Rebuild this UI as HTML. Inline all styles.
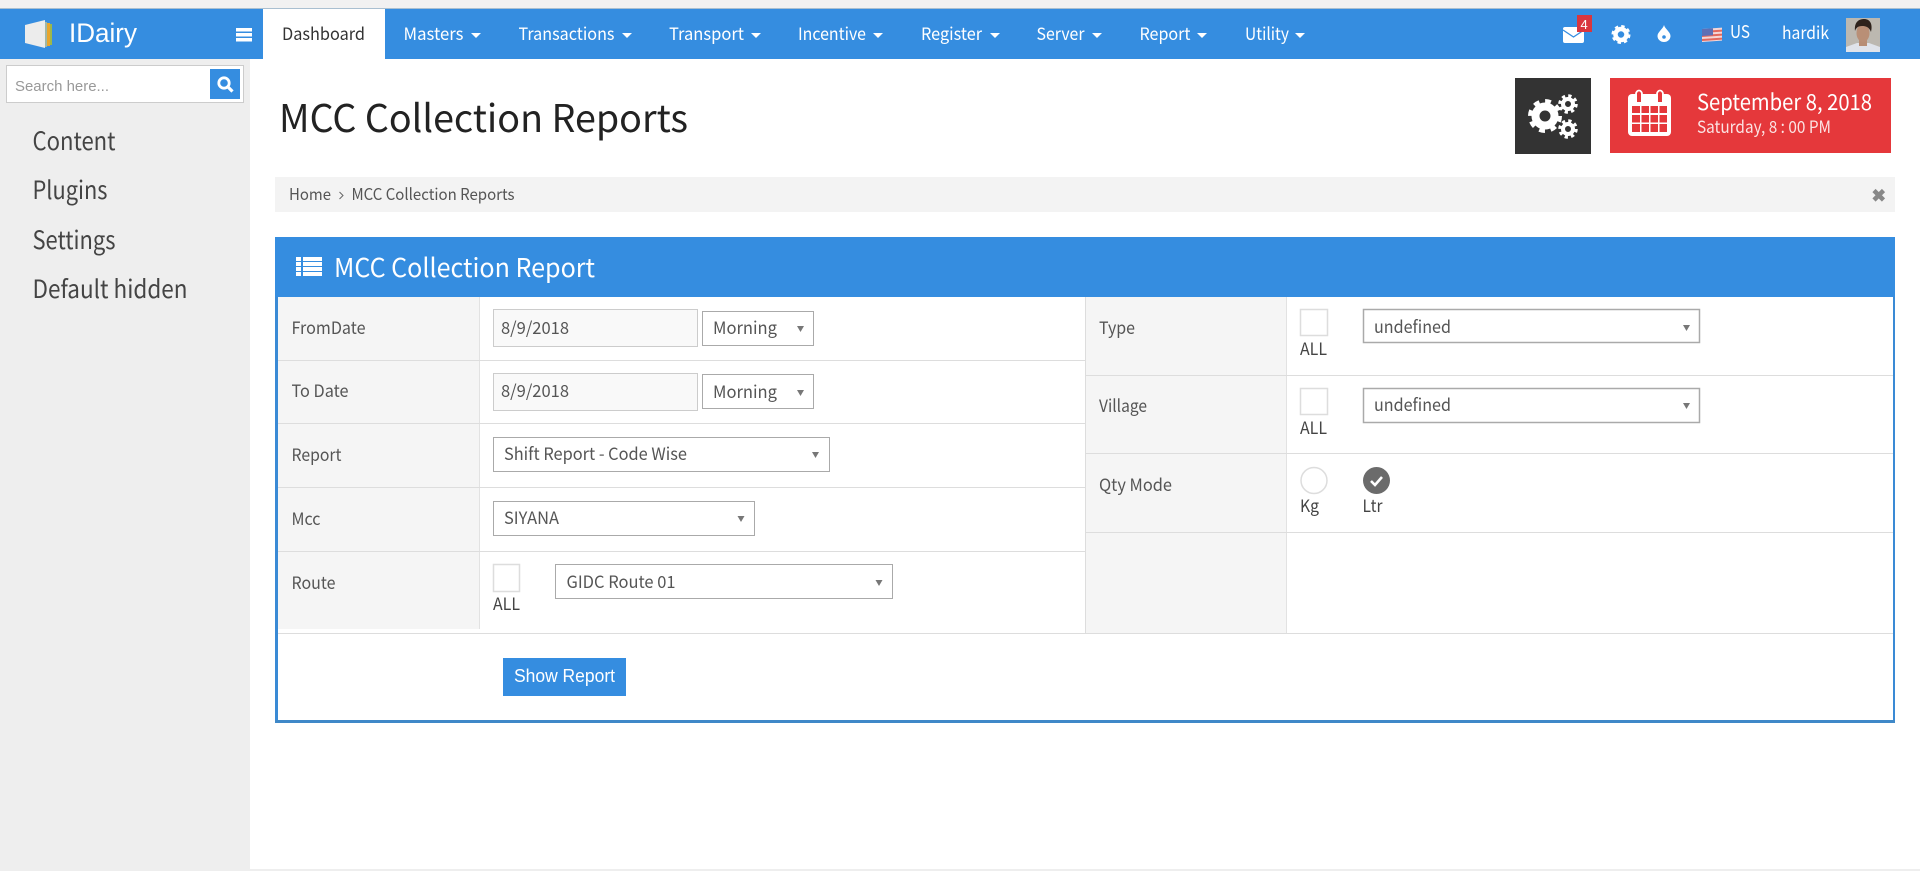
<!DOCTYPE html>
<html lang="en">
<head>
<meta charset="utf-8">
<title>MCC Collection Reports</title>
<style>
html,body{margin:0;padding:0;width:1920px;height:871px;overflow:hidden;background:#fff}
svg{display:block}
text{font-family:"Noto Sans CJK SC","Liberation Sans",sans-serif}
text.ar{font-family:"Liberation Sans",Arial,sans-serif}
.nav{font-size:17px;fill:#fff}
.side{font-size:25px;fill:#444}
.lbl{font-size:17px;fill:#555}
.val{font-size:17px;fill:#555}
.dark{font-size:17px;fill:#444}
.box{fill:#fff;stroke:#aaa;stroke-width:1}
.chk{fill:#fff;stroke:#ddd;stroke-width:1.5}
.in{fill:#f9f9f9;stroke:#ccc;stroke-width:1}
.line{fill:#ddd}
</style>
</head>
<body>
<svg xmlns="http://www.w3.org/2000/svg" width="1920" height="871" viewBox="0 0 1920 871">
<!-- top strip + nav -->
<rect width="1920" height="871" fill="#fff"/>
<rect width="1920" height="8" fill="#f1f1f1"/>
<rect y="8" width="1920" height="1" fill="#a9bfd0"/>
<rect y="9" width="1920" height="50" fill="#358de0"/>
<rect x="263" y="9" width="122" height="50" fill="#fff"/>
<!-- logo -->
<polygon points="25,25 45,20 45,48 25,43" fill="#ececec"/>
<rect x="45" y="22" width="2" height="25" fill="#9fb7a8"/>
<rect x="47" y="23" width="3" height="23" fill="#e8a52c"/>
<rect x="50" y="24" width="2" height="21" fill="#9cb84a"/>
<text class="ar" x="69" y="42" font-size="27" fill="#fff" textLength="68" lengthAdjust="spacingAndGlyphs">IDairy</text>
<rect x="236" y="28" width="16" height="3.500" fill="#fff"/><rect x="236" y="33" width="16" height="3.500" fill="#fff"/><rect x="236" y="38" width="16" height="3.500" fill="#fff"/>
<!-- nav items -->
<text x="282" y="40" class="nav" style="fill:#333" textLength="83" lengthAdjust="spacingAndGlyphs">Dashboard</text>
<text x="403.500" y="40" class="nav" textLength="60" lengthAdjust="spacingAndGlyphs">Masters</text><polygon points="471,33 481,33 476,38" fill="#fff"/>
<text x="518.500" y="40" class="nav" textLength="96" lengthAdjust="spacingAndGlyphs">Transactions</text><polygon points="622,33 632,33 627,38" fill="#fff"/>
<text x="669" y="40" class="nav" textLength="75" lengthAdjust="spacingAndGlyphs">Transport</text><polygon points="751,33 761,33 756,38" fill="#fff"/>
<text x="798" y="40" class="nav" textLength="68" lengthAdjust="spacingAndGlyphs">Incentive</text><polygon points="873,33 883,33 878,38" fill="#fff"/>
<text x="921" y="40" class="nav" textLength="61" lengthAdjust="spacingAndGlyphs">Register</text><polygon points="990,33 1000,33 995,38" fill="#fff"/>
<text x="1036.500" y="40" class="nav" textLength="48" lengthAdjust="spacingAndGlyphs">Server</text><polygon points="1092,33 1102,33 1097,38" fill="#fff"/>
<text x="1139.500" y="40" class="nav" textLength="51" lengthAdjust="spacingAndGlyphs">Report</text><polygon points="1197,33 1207,33 1202,38" fill="#fff"/>
<text x="1245" y="40" class="nav" textLength="44" lengthAdjust="spacingAndGlyphs">Utility</text><polygon points="1295,33 1305,33 1300,38" fill="#fff"/>
<!-- right nav -->
<rect x="1563" y="27" width="21" height="16" rx="2" fill="#fff"/>
<path d="M1563 30 L1573.500 37 L1584 30" fill="none" stroke="#358de0" stroke-width="1.300"/>
<rect x="1577" y="15" width="15" height="17" fill="#d9363e"/>
<text class="ar" x="1580.500" y="29" font-size="13" fill="#fff">4</text>
<circle cx="1621" cy="34.500" r="5.500" fill="none" stroke="#fff" stroke-width="4.500"/>
<circle cx="1621" cy="34.500" r="8" fill="none" stroke="#fff" stroke-width="3" stroke-dasharray="3.300 2.980"/>
<path d="M1664 25 C1665 29 1670.500 32 1670.500 36 A6.500 6 0 0 1 1657.500 36 C1657.500 32 1663 29 1664 25 Z" fill="#fff"/>
<circle cx="1664" cy="37" r="1.800" fill="#358de0"/>
<g transform="skewY(-4) translate(0 119)">
<rect x="1702" y="29" width="20" height="13" fill="#f4d6d6"/>
<rect x="1702" y="31" width="20" height="2" fill="#e2685e"/><rect x="1702" y="35" width="20" height="2" fill="#e2685e"/><rect x="1702" y="39" width="20" height="2" fill="#e2685e"/>
<rect x="1702" y="29" width="11" height="7" fill="#5f6fb5"/>
</g>
<text x="1730" y="38" class="nav" style="font-size:18px" textLength="20" lengthAdjust="spacingAndGlyphs">US</text>
<text x="1782" y="39" class="nav" textLength="47" lengthAdjust="spacingAndGlyphs">hardik</text>
<!-- avatar -->
<rect x="1846" y="18" width="34" height="34" fill="#bcb8b0"/>
<path d="M1846 52 V47 L1857 43 H1869 L1880 47 V52 Z" fill="#dfe3ea"/>
<rect x="1859" y="38" width="8" height="8" fill="#b78d74"/>
<ellipse cx="1863" cy="33" rx="6.500" ry="9" fill="#b98f76"/>
<path d="M1855 31 C1854 21 1860 19 1864 19 C1870 19 1873 24 1871 32 C1869 27 1866 26 1862 26 C1858 26 1856 28 1855 31 Z" fill="#2e221b"/>
<!-- sidebar -->
<rect y="59" width="250" height="812" fill="#eee"/>
<rect x="6.500" y="65.500" width="237" height="37" fill="#fff" stroke="#ccc"/>
<rect x="210" y="69" width="30" height="30" fill="#358de0"/>
<circle cx="224" cy="83" r="5.200" fill="none" stroke="#fff" stroke-width="2.800"/>
<line x1="228" y1="87" x2="232.500" y2="91.500" stroke="#fff" stroke-width="3.200"/>
<text class="ar" x="15" y="91" font-size="15" fill="#999" textLength="94" lengthAdjust="spacingAndGlyphs">Search here...</text>
<text x="32.500" y="150" class="side" textLength="83" lengthAdjust="spacingAndGlyphs">Content</text>
<text x="32.500" y="199" class="side" textLength="75" lengthAdjust="spacingAndGlyphs">Plugins</text>
<text x="32.500" y="249" class="side" textLength="83" lengthAdjust="spacingAndGlyphs">Settings</text>
<text x="32.500" y="298" class="side" textLength="155" lengthAdjust="spacingAndGlyphs">Default hidden</text>
<!-- title -->
<text x="279" y="132" font-size="38" fill="#222" textLength="409" lengthAdjust="spacingAndGlyphs">MCC Collection Reports</text>
<!-- gear box -->
<rect x="1515" y="78" width="76" height="76" fill="#333"/>
<g fill="none" stroke="#fff">
<circle cx="1545" cy="116" r="9.500" stroke-width="8"/>
<circle cx="1545" cy="116" r="14.500" stroke-width="5" stroke-dasharray="5.700 5.690"/>
<circle cx="1568" cy="104" r="5" stroke-width="4"/>
<circle cx="1568" cy="104" r="8" stroke-width="3.500" stroke-dasharray="3.200 3.080"/>
<circle cx="1568" cy="129" r="5" stroke-width="4"/>
<circle cx="1568" cy="129" r="8" stroke-width="3.500" stroke-dasharray="3.200 3.080"/>
</g>
<!-- date box -->
<rect x="1610" y="78" width="281" height="75" fill="#e5383b"/>
<rect x="1628" y="94" width="43" height="42" rx="4" fill="#fff"/>
<g fill="#e5383b">
<rect x="1632" y="106" width="8" height="7"/><rect x="1641.500" y="106" width="7.500" height="7"/><rect x="1650.500" y="106" width="7.500" height="7"/><rect x="1659.500" y="106" width="7.500" height="7"/>
<rect x="1632" y="115" width="8" height="7.500"/><rect x="1641.500" y="115" width="7.500" height="7.500"/><rect x="1650.500" y="115" width="7.500" height="7.500"/><rect x="1659.500" y="115" width="7.500" height="7.500"/>
<rect x="1632" y="124" width="8" height="8"/><rect x="1641.500" y="124" width="7.500" height="8"/><rect x="1650.500" y="124" width="7.500" height="8"/><rect x="1659.500" y="124" width="7.500" height="8"/>
<rect x="1637" y="93" width="4" height="9"/><rect x="1658" y="93" width="4" height="9"/>
</g>
<path d="M1636 94 A3 3.500 0 0 1 1642 94 M1657 94 A3 3.500 0 0 1 1663 94" fill="none" stroke="#fff" stroke-width="1.800"/>
<text x="1697" y="110" font-size="22" fill="#fff" textLength="175" lengthAdjust="spacingAndGlyphs">September 8, 2018</text>
<text x="1697" y="133" font-size="17" fill="#fbe3e3" textLength="134" lengthAdjust="spacingAndGlyphs">Saturday, 8 : 00 PM</text>
<!-- breadcrumb -->
<rect x="275" y="177" width="1620" height="35" fill="#f3f3f3"/>
<text x="289" y="200" font-size="16" fill="#555" textLength="42" lengthAdjust="spacingAndGlyphs">Home</text>
<path d="M339.500 192 L343 195.500 L339.500 199" fill="none" stroke="#666" stroke-width="1"/>
<text x="351.500" y="200" font-size="16" fill="#555" textLength="163" lengthAdjust="spacingAndGlyphs">MCC Collection Reports</text>
<path d="M1874 190.500 L1883.500 200 M1883.500 190.500 L1874 200" stroke="#888" stroke-width="4.500"/>
<!-- panel -->
<rect x="275" y="237" width="1620" height="60" fill="#358de0"/>
<rect x="275" y="297" width="3" height="426" fill="#3a8ad5"/>
<rect x="1893" y="297" width="2" height="426" fill="#3a8ad5"/>
<rect x="275" y="720" width="1620" height="3" fill="#3f88c8"/>
<g fill="#fff">
<rect x="296" y="257" width="5" height="4"/><rect x="303" y="257" width="19" height="4"/>
<rect x="296" y="262" width="5" height="4"/><rect x="303" y="262" width="19" height="4"/>
<rect x="296" y="267" width="5" height="4"/><rect x="303" y="267" width="19" height="4"/>
<rect x="296" y="272" width="5" height="4"/><rect x="303" y="272" width="19" height="4"/>
</g>
<text x="334" y="277" font-size="26" fill="#fff" textLength="261" lengthAdjust="spacingAndGlyphs">MCC Collection Report</text>
<!-- table backgrounds -->
<rect x="278" y="297" width="201" height="332" fill="#f5f5f5"/>
<rect x="1085" y="297" width="201" height="336" fill="#f5f5f5"/>
<rect x="479" y="297" width="1" height="332" fill="#e2e2e2"/>
<rect x="1085" y="297" width="1" height="336" fill="#ddd"/>
<rect x="1286" y="297" width="1" height="336" fill="#e2e2e2"/>
<rect class="line" x="278" y="360" width="807" height="1"/>
<rect class="line" x="278" y="423" width="807" height="1"/>
<rect class="line" x="278" y="487" width="807" height="1"/>
<rect class="line" x="278" y="551" width="807" height="1"/>
<rect class="line" x="278" y="633" width="1615" height="1"/>
<rect class="line" x="1085" y="375" width="808" height="1"/>
<rect class="line" x="1085" y="453" width="808" height="1"/>
<rect class="line" x="1085" y="532" width="808" height="1"/>
<!-- left labels -->
<text x="291.500" y="334" class="lbl" textLength="74" lengthAdjust="spacingAndGlyphs">FromDate</text>
<text x="291.500" y="397" class="lbl" textLength="57" lengthAdjust="spacingAndGlyphs">To Date</text>
<text x="291.500" y="461" class="lbl" textLength="50" lengthAdjust="spacingAndGlyphs">Report</text>
<text x="291.500" y="525" class="lbl" textLength="29" lengthAdjust="spacingAndGlyphs">Mcc</text>
<text x="291.500" y="589" class="lbl" textLength="44" lengthAdjust="spacingAndGlyphs">Route</text>
<!-- row 1 -->
<rect class="in" x="493.500" y="309.500" width="204" height="37"/>
<text x="501" y="334" class="val" textLength="68" lengthAdjust="spacingAndGlyphs">8/9/2018</text>
<rect class="box" x="702.500" y="311.500" width="111" height="34"/>
<text x="713" y="334" class="val" textLength="64" lengthAdjust="spacingAndGlyphs">Morning</text>
<polygon points="797,326 804,326 800.500,332" fill="#777"/>
<!-- row 2 -->
<rect class="in" x="493.500" y="373.500" width="204" height="37"/>
<text x="501" y="397" class="val" textLength="68" lengthAdjust="spacingAndGlyphs">8/9/2018</text>
<rect class="box" x="702.500" y="374.500" width="111" height="34"/>
<text x="713" y="398" class="val" textLength="64" lengthAdjust="spacingAndGlyphs">Morning</text>
<polygon points="797,390 804,390 800.500,396" fill="#777"/>
<!-- row 3 -->
<rect class="box" x="493.500" y="437.500" width="336" height="34"/>
<text x="504" y="460" class="val" textLength="183" lengthAdjust="spacingAndGlyphs">Shift Report - Code Wise</text>
<polygon points="812,452 819,452 815.500,458" fill="#777"/>
<!-- row 4 -->
<rect class="box" x="493.500" y="501.500" width="261" height="34"/>
<text x="504" y="524" class="val" textLength="55" lengthAdjust="spacingAndGlyphs">SIYANA</text>
<polygon points="737.500,516 744.500,516 741,522" fill="#777"/>
<!-- row 5 -->
<rect class="chk" x="493.500" y="564.500" width="26" height="27"/>
<text x="493" y="610" class="dark" textLength="27" lengthAdjust="spacingAndGlyphs">ALL</text>
<rect class="box" x="555.500" y="564.500" width="337" height="34"/>
<text x="566.500" y="588" class="val" textLength="109" lengthAdjust="spacingAndGlyphs">GIDC Route 01</text>
<polygon points="875.500,580 882.500,580 879,586" fill="#777"/>
<!-- right labels -->
<text x="1099" y="334" class="lbl" textLength="36" lengthAdjust="spacingAndGlyphs">Type</text>
<text x="1099" y="412" class="lbl" textLength="48" lengthAdjust="spacingAndGlyphs">Village</text>
<text x="1099" y="491" class="lbl" textLength="73" lengthAdjust="spacingAndGlyphs">Qty Mode</text>
<!-- type -->
<rect class="chk" x="1300.500" y="309.500" width="27" height="26"/>
<text x="1300" y="355" class="dark" textLength="27" lengthAdjust="spacingAndGlyphs">ALL</text>
<rect x="1363.500" y="309.500" width="336" height="33" fill="#fff" stroke="#aaa" stroke-width="1.500"/>
<text x="1374" y="333" class="val" textLength="77" lengthAdjust="spacingAndGlyphs">undefined</text>
<polygon points="1683,325 1690,325 1686.500,331" fill="#777"/>
<!-- village -->
<rect class="chk" x="1300.500" y="388.500" width="27" height="26"/>
<text x="1300" y="434" class="dark" textLength="27" lengthAdjust="spacingAndGlyphs">ALL</text>
<rect x="1363.500" y="388.500" width="336" height="34" fill="#fff" stroke="#aaa" stroke-width="1.500"/>
<text x="1374" y="411" class="val" textLength="77" lengthAdjust="spacingAndGlyphs">undefined</text>
<polygon points="1683,403 1690,403 1686.500,409" fill="#777"/>
<!-- qty -->
<circle cx="1314" cy="480.500" r="13" fill="#fff" stroke="#ddd" stroke-width="1.500"/>
<text x="1300" y="512" class="dark" textLength="19" lengthAdjust="spacingAndGlyphs">Kg</text>
<circle cx="1376.500" cy="480.500" r="13.500" fill="#6b6b6b"/>
<path d="M1371 481 L1375 485 L1382 477" fill="none" stroke="#fff" stroke-width="2.600"/>
<text x="1362.500" y="512" class="dark" textLength="20" lengthAdjust="spacingAndGlyphs">Ltr</text>
<!-- button -->
<rect x="503" y="658" width="123" height="38" fill="#358de0"/>
<text class="ar" x="514" y="682" font-size="18" fill="#fff" textLength="101" lengthAdjust="spacingAndGlyphs">Show Report</text>
<!-- bottom strip -->
<rect y="869" width="1920" height="2" fill="#eee"/>
</svg>
</body>
</html>
